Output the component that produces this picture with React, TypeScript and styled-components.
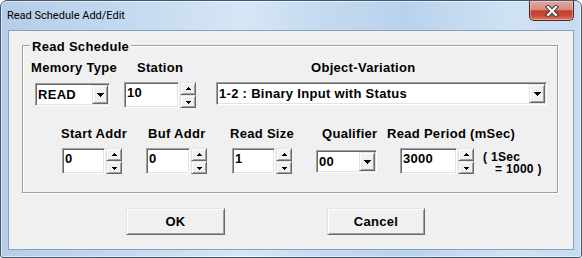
import React from 'react';
import styled, { createGlobalStyle } from 'styled-components';

const Global = createGlobalStyle`
  html, body { margin: 0; padding: 0; background: #ffffff; }
  body { width: 582px; height: 258px; overflow: hidden; }
`;

const Window = styled.div`
  box-sizing: border-box;
  width: 582px;
  height: 258px;
  display: flex;
  flex-direction: column;
  border: 1px solid #44586e;
  border-radius: 7px 7px 3px 3px;
  background: linear-gradient(90deg, #b4cde8 0%, #c2d8ef 20%, #d6e6f6 42%, #c4daf1 55%, #b9d2ec 70%, #cfe2f5 88%, #c6dcf2 100%);
  box-shadow: inset 0 0 0 1px rgba(255, 255, 255, 0.55);
  overflow: hidden;
`;

const TitleBar = styled.div`
  height: 29px;
  flex: none;
  display: flex;
  align-items: flex-start;
`;

const Title = styled.div`
  font-family: Roboto, "Liberation Sans", sans-serif;
  font-size: 11px;
  line-height: 15px;
  color: #000;
  padding: 7px 0 0 6px;
`;

const CloseButton = styled.div`
  box-sizing: border-box;
  margin-left: auto;
  margin-right: 7px;
  width: 45px;
  height: 20px;
  border: 1px solid #5b1f19;
  border-top: none;
  border-radius: 0 0 5px 5px;
  background: linear-gradient(#e3a79b 0%, #d88a7b 45%, #c0402e 52%, #c5493a 75%, #df7b5e 100%);
  box-shadow: inset 0 0 0 1px rgba(255, 255, 255, 0.35);
  display: flex;
  align-items: center;
  justify-content: center;
`;

const Body = styled.div`
  flex: 1;
  display: flex;
  padding: 0 7px 7px 7px;
`;

const Client = styled.div`
  flex: 1;
  box-sizing: border-box;
  background: #f0f0f0;
  border: 1px solid #8c9fb6;
  padding: 14px 0 0 13px;
  font-family: "Liberation Sans", Arial, sans-serif;
  font-weight: bold;
  font-size: 13px;
  letter-spacing: 0.3px;
  color: #000;
`;

const Group = styled.div`
  position: relative;
  box-sizing: border-box;
  width: 536px;
  height: 148px;
  border: 1px solid #a0a0a0;
  box-shadow: inset 1px 1px 0 #ffffff, 1px 1px 0 #ffffff;
`;

const Legend = styled.div`
  position: absolute;
  top: -7px;
  left: 7px;
  padding: 0 2px;
  line-height: 15px;
  background: #f0f0f0;
`;

const LabelRow = styled.div<{ $mt: number; $pl: number }>`
  display: flex;
  margin-top: ${p => p.$mt}px;
  padding-left: ${p => p.$pl}px;
  line-height: 15px;
  white-space: nowrap;
`;

const Label = styled.div<{ $w?: number }>`
  flex: none;
  width: ${p => (p.$w ? `${p.$w}px` : 'auto')};
`;

const ControlRow = styled.div<{ $mt: number }>`
  display: flex;
  align-items: flex-start;
  margin-top: ${p => p.$mt}px;
`;

const sunken = `
  border: 1px solid;
  border-color: #a0a0a0 #ffffff #ffffff #a0a0a0;
  box-shadow: inset 1px 1px 0 #696969, inset -1px -1px 0 #e3e3e3;
`;

const raised = `
  border: 1px solid;
  border-color: #e3e3e3 #696969 #696969 #e3e3e3;
  box-shadow: inset 1px 1px 0 #ffffff, inset -1px -1px 0 #a0a0a0;
  background: #f0f0f0;
`;

const Combo = styled.div<{ $w: number; $ml: number; $mt?: number }>`
  box-sizing: border-box;
  flex: none;
  display: flex;
  width: ${p => p.$w}px;
  height: 23px;
  margin-left: ${p => p.$ml}px;
  margin-top: ${p => p.$mt ?? 0}px;
  padding: 1px;
  background: #ffffff;
  ${sunken}
`;

const ComboText = styled.div`
  flex: 1;
  padding-left: 1px;
  line-height: 19px;
  white-space: nowrap;
  overflow: hidden;
`;

const DropButton = styled.div`
  box-sizing: border-box;
  flex: none;
  width: 16px;
  height: 19px;
  display: flex;
  align-items: center;
  justify-content: center;
  ${raised}
`;

const SpinWrap = styled.div<{ $ml: number }>`
  flex: none;
  display: flex;
  gap: 1px;
  margin-left: ${p => p.$ml}px;
`;

const Edit = styled.div<{ $w: number }>`
  box-sizing: border-box;
  width: ${p => p.$w}px;
  height: 26px;
  padding: 2px 2px 0 2px;
  line-height: 15px;
  background: #ffffff;
  ${sunken}
`;

const Spinner = styled.div`
  display: flex;
  flex-direction: column;
  width: 16px;
  height: 26px;
`;

const SpinButton = styled.div<{ $down?: boolean }>`
  box-sizing: border-box;
  height: 13px;
  display: flex;
  justify-content: center;
  align-items: ${p => (p.$down ? 'flex-end' : 'center')};
  padding-bottom: ${p => (p.$down ? '3px' : '0')};
  ${raised}
`;

const Note = styled.div<{ $ml: number }>`
  margin-left: ${p => p.$ml}px;
  margin-top: 3px;
  font-size: 12px;
  line-height: 12px;
  white-space: nowrap;
`;

const NoteLine = styled.div<{ $indent?: number }>`
  padding-left: ${p => p.$indent ?? 0}px;
`;

const ButtonRow = styled.div`
  display: flex;
  margin-top: 15px;
  padding-left: 104px;
`;

const PushButton = styled.div<{ $w: number; $ml?: number }>`
  box-sizing: border-box;
  width: ${p => p.$w}px;
  height: 27px;
  margin-left: ${p => p.$ml ?? 0}px;
  display: flex;
  align-items: center;
  justify-content: center;
  ${raised}
`;

const UpArrow = () => (
  <svg width="5" height="3" viewBox="0 0 5 3" shapeRendering="crispEdges">
    <path d="M2 0h1v1h-1z M1 1h3v1h-3z M0 2h5v1h-5z" fill="#000" />
  </svg>
);

const DownArrow = () => (
  <svg width="5" height="3" viewBox="0 0 5 3" shapeRendering="crispEdges">
    <path d="M0 0h5v1h-5z M1 1h3v1h-3z M2 2h1v1h-1z" fill="#000" />
  </svg>
);

const ComboArrow = () => (
  <svg width="7" height="4" viewBox="0 0 7 4" shapeRendering="crispEdges">
    <path d="M0 0h7v1h-7z M1 1h5v1h-5z M2 2h3v1h-3z M3 3h1v1h-1z" fill="#000" />
  </svg>
);

const CloseGlyph = () => (
  <svg width="14" height="12" viewBox="0 0 14 12">
    <path d="M3 2 L11 10 M11 2 L3 10" stroke="#3b3b3b" strokeWidth="4.2" strokeLinecap="square" />
    <path d="M3 2 L11 10 M11 2 L3 10" stroke="#ffffff" strokeWidth="2.2" strokeLinecap="square" />
  </svg>
);

type ComboProps = { value: string; w: number; ml: number; mt?: number };
const ComboBox = ({ value, w, ml, mt }: ComboProps) => (
  <Combo $w={w} $ml={ml} $mt={mt}>
    <ComboText>{value}</ComboText>
    <DropButton>
      <ComboArrow />
    </DropButton>
  </Combo>
);

type SpinProps = { value: string; w: number; ml: number };
const SpinField = ({ value, w, ml }: SpinProps) => (
  <SpinWrap $ml={ml}>
    <Edit $w={w}>{value}</Edit>
    <Spinner>
      <SpinButton>
        <UpArrow />
      </SpinButton>
      <SpinButton $down>
        <DownArrow />
      </SpinButton>
    </Spinner>
  </SpinWrap>
);

export default function App() {
  return (
    <>
      <Global />
      <Window>
        <TitleBar>
          <Title>Read Schedule Add/Edit</Title>
          <CloseButton>
            <CloseGlyph />
          </CloseButton>
        </TitleBar>
        <Body>
          <Client>
            <Group>
              <Legend>Read Schedule</Legend>
              <LabelRow $mt={14} $pl={8}>
                <Label $w={106}>Memory Type</Label>
                <Label $w={174}>Station</Label>
                <Label>Object-Variation</Label>
              </LabelRow>
              <ControlRow $mt={7}>
                <ComboBox value="READ" w={75} ml={12} mt={1} />
                <SpinField value="10" w={55} ml={14} />
                <ComboBox value="1-2 : Binary Input with Status" w={331} ml={20} />
              </ControlRow>
              <LabelRow $mt={18} $pl={38}>
                <Label $w={87}>Start Addr</Label>
                <Label $w={82}>Buf Addr</Label>
                <Label $w={92}>Read Size</Label>
                <Label $w={65}>Qualifier</Label>
                <Label>Read Period (mSec)</Label>
              </LabelRow>
              <ControlRow $mt={7}>
                <SpinField value="0" w={43} ml={39} />
                <SpinField value="0" w={44} ml={24} />
                <SpinField value="1" w={43} ml={25} />
                <ComboBox value="00" w={61} ml={24} mt={2} />
                <SpinField value="3000" w={57} ml={23} />
                <Note $ml={9}>
                  <NoteLine>( 1Sec</NoteLine>
                  <NoteLine $indent={12}>= 1000 )</NoteLine>
                </Note>
              </ControlRow>
            </Group>
            <ButtonRow>
              <PushButton $w={99}>OK</PushButton>
              <PushButton $w={98} $ml={102}>Cancel</PushButton>
            </ButtonRow>
          </Client>
        </Body>
      </Window>
    </>
  );
}
